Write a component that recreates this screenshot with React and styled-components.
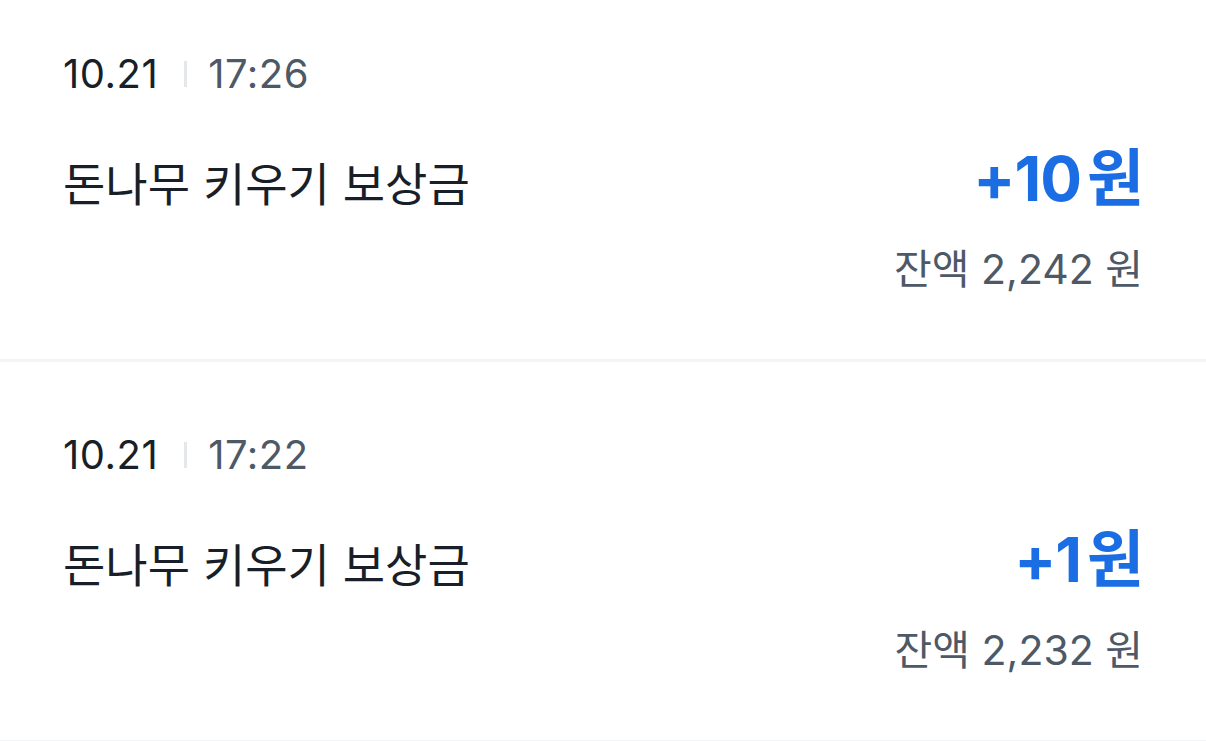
import React from "react";
import styled, { createGlobalStyle } from "styled-components";

const GlobalStyle = createGlobalStyle`
  html, body {
    margin: 0;
    padding: 0;
    background: #ffffff;
  }
  body {
    font-family: "Inter", "Noto Sans CJK KR", sans-serif;
    overflow: hidden;
  }
`;

const List = styled.ul`
  list-style: none;
  margin: -19px 0 0 0;
  padding: 0;
  width: 1206px;
`;

const Item = styled.li`
  padding: 69px 63px 66px 63px;
  border-bottom: 3px solid #f2f4f6;
  display: flex;
  flex-direction: column;
  gap: 45px;
`;

const DateLine = styled.div`
  display: flex;
  align-items: center;
  font-size: 40px;
  line-height: 48px;
  letter-spacing: 0.5px;
`;

const DateText = styled.span`
  color: #191f28;
`;

const Separator = styled.span`
  width: 3px;
  height: 26px;
  background: #e5e8eb;
  margin: 0 21px 0 26px;
`;

const TimeText = styled.span`
  color: #4e5968;
`;

const MainRow = styled.div`
  display: flex;
  justify-content: space-between;
  align-items: baseline;
`;

const Title = styled.div`
  font-size: 46px;
  line-height: 54px;
  color: #191f28;
`;

const AmountCol = styled.div`
  display: flex;
  flex-direction: column;
  align-items: flex-end;
  gap: 30px;
`;

const Amount = styled.div`
  font-size: 62px;
  line-height: 72px;
  font-weight: 700;
  color: #1b6de3;
  letter-spacing: -1px;
`;

const Won = styled.span`
  margin-left: 6px;
`;

const Balance = styled.div`
  font-size: 41px;
  line-height: 48px;
  color: #4e5968;
`;

const items = [
  { date: "10.21", time: "17:26", title: "돈나무 키우기 보상금", amount: "+10", balance: "2,242" },
  { date: "10.21", time: "17:22", title: "돈나무 키우기 보상금", amount: "+1", balance: "2,232" },
];

export default function App() {
  return (
    <>
      <GlobalStyle />
      <List>
        {items.map((it, i) => (
          <Item key={i}>
            <DateLine>
              <DateText>{it.date}</DateText>
              <Separator />
              <TimeText>{it.time}</TimeText>
            </DateLine>
            <MainRow>
              <Title>{it.title}</Title>
              <AmountCol>
                <Amount>
                  {it.amount}
                  <Won>원</Won>
                </Amount>
                <Balance>잔액 {it.balance} 원</Balance>
              </AmountCol>
            </MainRow>
          </Item>
        ))}
      </List>
    </>
  );
}
